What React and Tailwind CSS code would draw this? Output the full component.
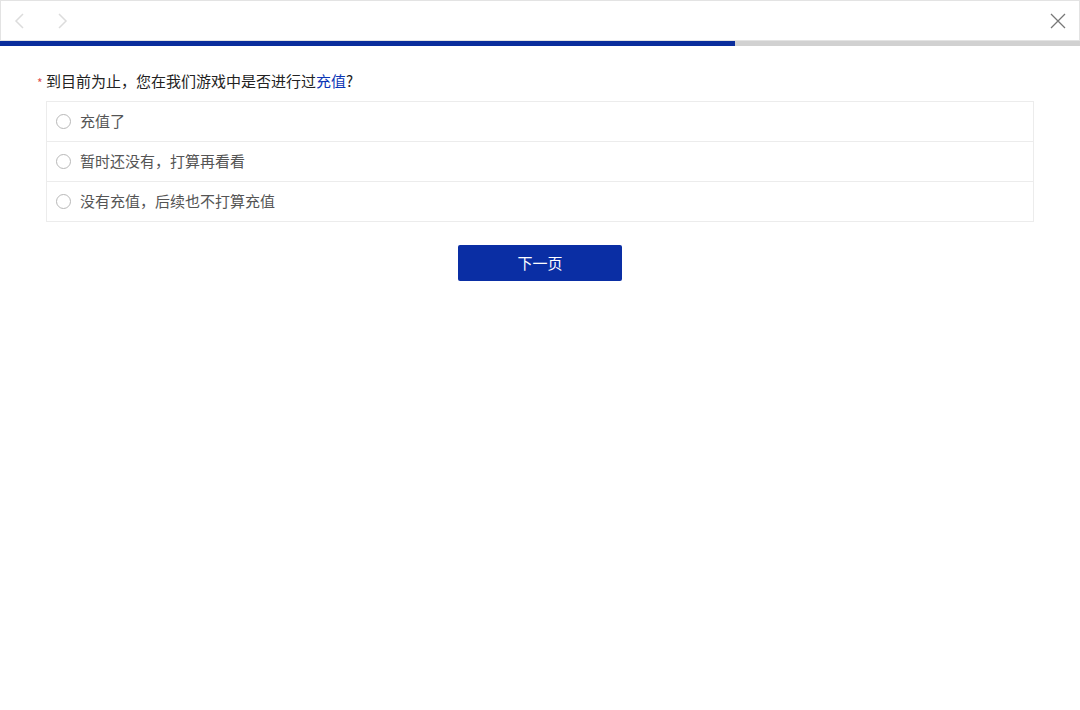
import React from "react";

const font = { fontFamily: '"Noto Sans CJK SC", "Noto Sans", sans-serif' };

function Radio() {
  return <span className="block w-[15px] h-[15px] rounded-full border border-[#b8b8b8] bg-white shrink-0" />;
}

export default function App() {
  const options = ["充值了", "暂时还没有，打算再看看", "没有充值，后续也不打算充值"];
  return (
    <div className="w-[1080px] h-[710px] bg-white" style={font}>
      <div className="h-[41px] border border-[#e3e3e3] flex items-center justify-between px-[10px]">
        <div className="flex items-center gap-[28px] pl-[2px]">
          <svg width="14" height="18" viewBox="0 0 14 18" fill="none" stroke="#dcdcdc" strokeWidth="1.5">
            <path d="M10 2 L3 9 L10 16" />
          </svg>
          <svg width="14" height="18" viewBox="0 0 14 18" fill="none" stroke="#dcdcdc" strokeWidth="1.5">
            <path d="M4 2 L11 9 L4 16" />
          </svg>
        </div>
        <svg width="18" height="18" viewBox="0 0 18 18" fill="none" stroke="#777" strokeWidth="1.3" className="mr-[2px]">
          <path d="M2 2 L16 16 M16 2 L2 16" />
        </svg>
      </div>
      <div className="h-[5px] bg-[#d1d1d1] flex">
        <div className="w-[735px] h-full bg-[#0a2d9c]" />
      </div>
      <div className="pl-[37px] pr-[46px] pt-[24px]">
        <div className="flex items-center h-[22px] text-[15px] text-[#222] leading-[22px]">
          <span className="text-[#e05050] text-[12px] w-[9px] leading-[22px] translate-y-[2px]">*</span>
          <span>到目前为止，您在我们游戏中是否进行过<span className="text-[#0b35b5]">充值</span>?</span>
        </div>
        <div className="ml-[9px] mt-[9px] border border-[#ececec]">
          {options.map((o, i) => (
            <div key={o} className={"h-[39px] flex items-center gap-[9px] pl-[9px] text-[15px] text-[#555] " + (i > 0 ? "h-[40px] border-t border-[#ececec]" : "")}>
              <Radio />
              <span>{o}</span>
            </div>
          ))}
        </div>
        <div className="flex justify-center mt-[23px] pl-[9px]">
          <button className="w-[164px] h-[36px] bg-[#0a2ea4] text-white text-[15px] rounded-[2px]">下一页</button>
        </div>
      </div>
    </div>
  );
}
